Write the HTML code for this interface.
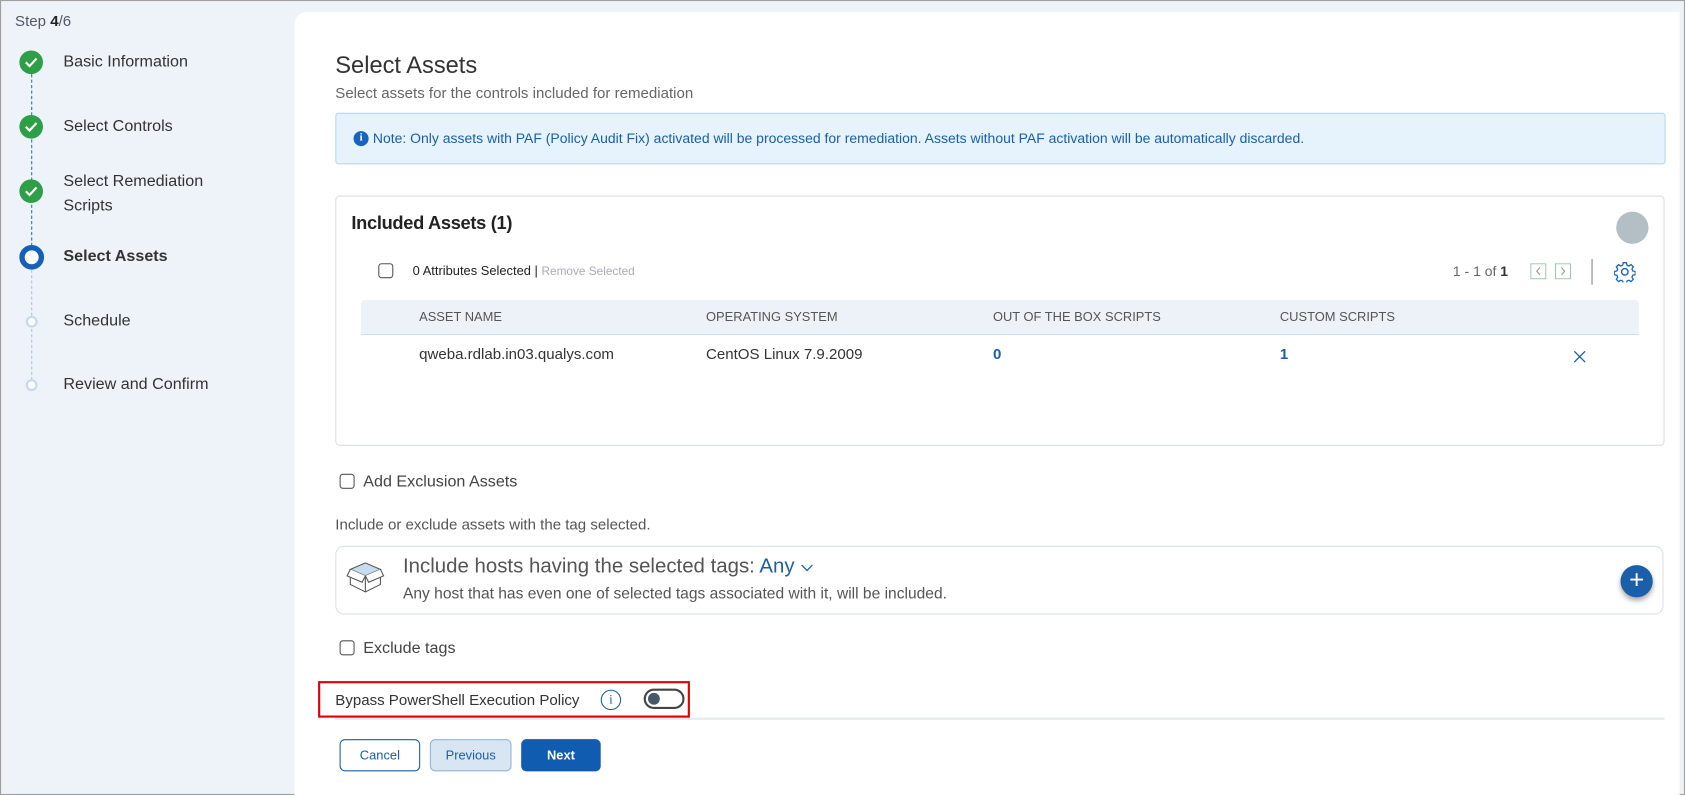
<!DOCTYPE html>
<html><head><meta charset="utf-8"><style>
*{box-sizing:border-box;margin:0;padding:0}
html,body{width:1685px;height:795px;overflow:hidden;background:#fff;font-family:"Liberation Sans",sans-serif}
#w{position:absolute;left:0;top:0;width:1568px;height:740px;transform:scale(1.07462,1.07432);transform-origin:0 0;background:#eef3f9;border:1px solid #a0a0a0}
.a{position:absolute;white-space:nowrap}
.main{position:absolute;left:273px;top:10px;width:1289px;height:730px;background:#fff;border-top-left-radius:12px}
.dot{position:absolute;width:22px;height:22px;border-radius:50%;background:#2e9e47;left:17px}
.dot svg{position:absolute;left:5px;top:6px}
.step{position:absolute;left:58px;font-size:15px;color:#333}
.cb{position:absolute;width:14px;height:14px;border:1px solid #555;border-radius:3px;background:#fff}
.btn{position:absolute;top:687px;height:30px;border-radius:5px;font-size:12px;text-align:center;line-height:28px}
</style></head><body><div id="w">
<div class="a" style="left:13px;top:10px;font-size:14px;color:#556">Step <b style="color:#222">4</b>/6</div>
<div class="a" style="left:28px;top:68px;height:160px;border-left:1.5px dashed #2a6fc0"></div>
<div class="a" style="left:28px;top:250px;height:108px;border-left:1px dashed #a9c6e6"></div>
<div class="dot" style="top:46px"><svg width="12" height="10"><path d="M1 5l3.5 3.5L11 1.5" stroke="#fff" stroke-width="2" fill="none"/></svg></div>
<div class="dot" style="top:106px"><svg width="12" height="10"><path d="M1 5l3.5 3.5L11 1.5" stroke="#fff" stroke-width="2" fill="none"/></svg></div>
<div class="dot" style="top:166px"><svg width="12" height="10"><path d="M1 5l3.5 3.5L11 1.5" stroke="#fff" stroke-width="2" fill="none"/></svg></div>
<div class="a" style="left:17px;top:227px;width:23px;height:23px;border-radius:50%;background:#0d4fa0;border:5px solid #1560b8"><div style="width:13px;height:13px;border-radius:50%;background:#fff;margin:0"></div></div>
<div class="a" style="left:23px;top:293px;width:11px;height:11px;border-radius:50%;border:2.5px solid #c5d9ee;background:#fff"></div>
<div class="a" style="left:23px;top:352px;width:11px;height:11px;border-radius:50%;border:2.5px solid #c5d9ee;background:#fff"></div>
<div class="step" style="top:48px">Basic Information</div>
<div class="step" style="top:108px">Select Controls</div>
<div class="step" style="top:156px;line-height:23px">Select Remediation<br>Scripts</div>
<div class="step" style="top:229px;font-weight:bold">Select Assets</div>
<div class="step" style="top:289px">Schedule</div>
<div class="step" style="top:348px">Review and Confirm</div>
<div class="main"></div>
<div class="a" style="left:311px;top:47px;font-size:22px;color:#333">Select Assets</div>
<div class="a" style="left:311px;top:77px;font-size:14px;color:#666">Select assets for the controls included for remediation</div>
<div class="a" style="left:311px;top:104px;width:1238px;height:48px;background:#e6f2fc;border:1px solid #b8d7f0;border-radius:3px"></div>
<div class="a" style="left:328px;top:121px;width:14px;height:14px;border-radius:50%;background:#1565c0;color:#fff;font-size:10px;font-weight:bold;text-align:center;line-height:14px;font-family:'Liberation Serif',serif">i</div>
<div class="a" style="left:346px;top:120px;font-size:13px;color:#1b5fa8">Note: Only assets with PAF (Policy Audit Fix) activated will be processed for remediation. Assets without PAF activation will be automatically discarded.</div>
<div class="a" style="left:311px;top:181px;width:1237px;height:233px;border:1px solid #dcdfe3;border-radius:4px"></div>
<div class="a" style="left:326px;top:197px;font-size:17px;font-weight:bold;color:#222;letter-spacing:-0.3px">Included Assets (1)</div>
<div class="a" style="left:1503px;top:196px;width:30px;height:30px;border-radius:50%;background:#b3bec5"></div>
<div class="cb" style="left:351px;top:244px"></div>
<div class="a" style="left:383px;top:244px;font-size:12px;color:#222">0 Attributes Selected | <span style="color:#aab;font-size:11px">Remove Selected</span></div>
<div class="a" style="left:1351px;top:244px;font-size:13px;color:#666">1 - 1 of <b style="color:#333">1</b></div>
<svg class="a" style="left:1423px;top:244px" width="15" height="15"><rect x=".5" y=".5" width="14" height="14" fill="none" stroke="#9cc9a8"/><path d="M9 4L6 7.5 9 11" fill="none" stroke="#999"/></svg>
<svg class="a" style="left:1446px;top:244px" width="15" height="15"><rect x=".5" y=".5" width="14" height="14" fill="none" stroke="#9cc9a8"/><path d="M6 4l3 3.5L6 11" fill="none" stroke="#999"/></svg>
<div class="a" style="left:1480px;top:240px;height:24px;border-left:1px solid #888"></div>
<svg class="a" style="left:1501px;top:242px" width="20" height="20" viewBox="0 0 20 20"><circle cx="10" cy="10" r="3" fill="none" stroke="#1565c0" stroke-width="1.3"/><path d="M8.5 1.5h3l.5 2.3 1.8.8 2-1.3 2.1 2.1-1.3 2 .8 1.8 2.3.5v3l-2.3.5-.8 1.8 1.3 2-2.1 2.1-2-1.3-1.8.8-.5 2.3h-3l-.5-2.3-1.8-.8-2 1.3-2.1-2.1 1.3-2-.8-1.8-2.3-.5v-3l2.3-.5.8-1.8-1.3-2 2.1-2.1 2 1.3 1.8-.8z" fill="none" stroke="#1565c0" stroke-width="1.2"/></svg>
<div class="a" style="left:335px;top:278px;width:1189px;height:33px;background:#edf2f8;border-bottom:1px solid #c3d7ee;border-radius:4px 4px 0 0"></div>
<div class="a" style="left:389px;top:287px;font-size:12px;color:#555">ASSET NAME</div>
<div class="a" style="left:656px;top:287px;font-size:12px;color:#555">OPERATING SYSTEM</div>
<div class="a" style="left:923px;top:287px;font-size:12px;color:#555">OUT OF THE BOX SCRIPTS</div>
<div class="a" style="left:1190px;top:287px;font-size:12px;color:#555">CUSTOM SCRIPTS</div>
<div class="a" style="left:389px;top:320px;font-size:14px;color:#333">qweba.rdlab.in03.qualys.com</div>
<div class="a" style="left:656px;top:320px;font-size:14px;color:#333">CentOS Linux 7.9.2009</div>
<div class="a" style="left:923px;top:320px;font-size:14px;color:#1a5fa8;font-weight:bold">0</div>
<div class="a" style="left:1190px;top:320px;font-size:14px;color:#1a5fa8;font-weight:bold">1</div>
<svg class="a" style="left:1463px;top:325px" width="12" height="12"><path d="M1 1l10 10M11 1L1 11" stroke="#1a5fa8" stroke-width="1.2"/></svg>
<div class="cb" style="left:315px;top:440px"></div>
<div class="a" style="left:337px;top:439px;font-size:15px;color:#444">Add Exclusion Assets</div>
<div class="a" style="left:311px;top:479px;font-size:14px;color:#555">Include or exclude assets with the tag selected.</div>
<div class="a" style="left:311px;top:507px;width:1236px;height:64px;border:1px solid #dcdfe3;border-radius:8px"></div>
<svg class="a" style="left:321px;top:517px" width="36" height="36" viewBox="0 0 36 36"><path d="M4 12l14-6 14 6-14 6z" fill="#c5dcef" stroke="#555" stroke-width="1"/><path d="M4 12v14l14 7 14-7V12M18 18v15" fill="none" stroke="#555" stroke-width="1"/><path d="M4 12l-3 6 14 6 3-6M32 12l3 6-14 6-3-6" fill="#fff" stroke="#555" stroke-width="1"/></svg>
<div class="a" style="left:374px;top:516px;font-size:19px;color:#555">Include hosts having the selected tags: <span style="color:#1a5fa8">Any</span> <svg width="12" height="8"><path d="M1 1l5 5 5-5" stroke="#1a5fa8" fill="none" stroke-width="1.2"/></svg></div>
<div class="a" style="left:374px;top:544px;font-size:14.5px;color:#555">Any host that has even one of selected tags associated with it, will be included.</div>
<div class="a" style="left:1507px;top:525px;width:30px;height:30px;border-radius:50%;background:#1a5fa8;box-shadow:0 3px 5px rgba(0,0,0,.35);color:#fff;font-size:24px;text-align:center;line-height:29px">+</div>
<div class="cb" style="left:315px;top:595px"></div>
<div class="a" style="left:337px;top:594px;font-size:15px;color:#444">Exclude tags</div>
<div class="a" style="left:311px;top:667px;width:1237px;border-top:2px solid #e6e9ed"></div>
<div class="a" style="left:295px;top:633px;width:346px;height:34px;border:2px solid #e00000"></div>
<div class="a" style="left:311px;top:642px;font-size:14px;color:#333">Bypass PowerShell Execution Policy</div>
<div class="a" style="left:558px;top:641px;width:19px;height:19px;border-radius:50%;border:1.3px solid #1a5fa8;color:#1a5fa8;font-size:12px;text-align:center;line-height:17px;font-family:'Liberation Serif',serif">i</div>
<div class="a" style="left:598px;top:640px;width:38px;height:19px;border-radius:10px;border:2px solid #444;background:#fff"><div style="position:absolute;left:2px;top:2px;width:11px;height:11px;border-radius:50%;background:#455a64"></div></div>
<div class="btn" style="left:315px;width:75px;border:1px solid #1a5fa8;color:#1a5fa8;background:#fff">Cancel</div>
<div class="btn" style="left:399px;width:76px;border:1px solid #8fb4d8;color:#1a5fa8;background:#d8e6f4">Previous</div>
<div class="btn" style="left:484px;width:74px;border:1px solid #0f5cb0;color:#fff;background:#0f5cb0;font-weight:bold">Next</div>
</div></body></html>
